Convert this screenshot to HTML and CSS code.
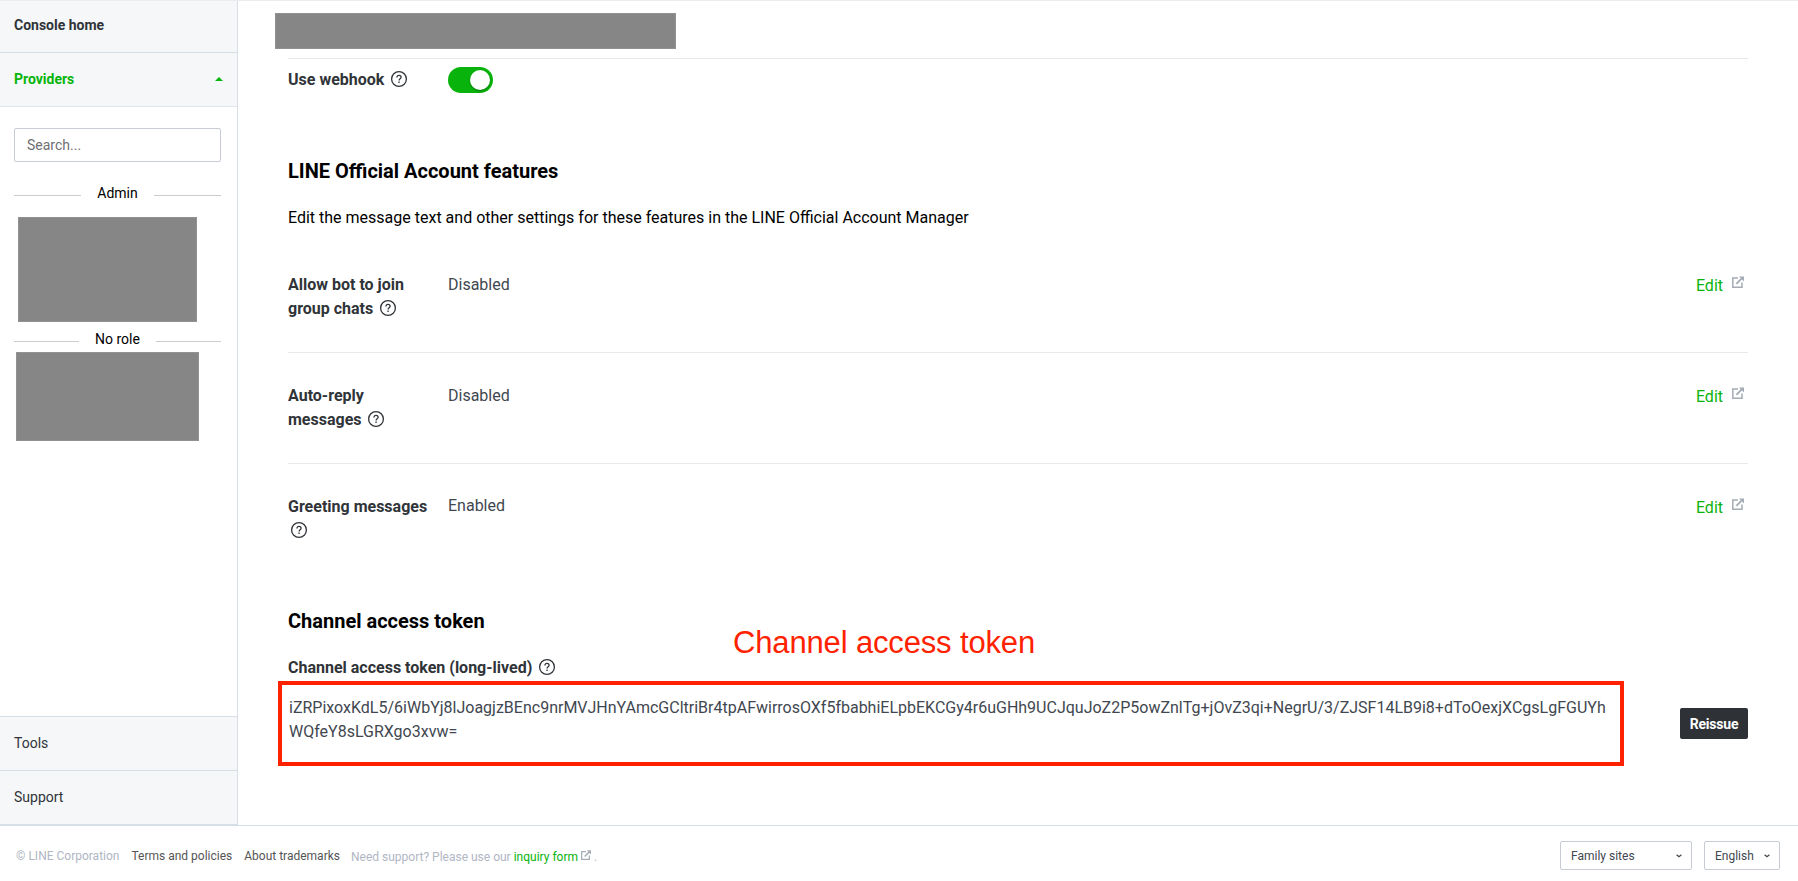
FILE: index.html
```html
<!DOCTYPE html>
<html lang="en">
<head>
<meta charset="utf-8">
<title>Channel settings</title>
<link rel="stylesheet" href="styles.css">
</head>
<body>
<svg class="defs" width="0" height="0">
  <symbol id="help" viewBox="0 0 18 18">
    <circle cx="9" cy="9" r="7.4" fill="none" stroke="currentColor" stroke-width="1.3"/>
    <path d="M6.9 7.4C6.9 6.1 7.8 5.3 9 5.3s2.1.8 2.1 1.9c0 1.5-2 1.6-2 3.2" fill="none" stroke="currentColor" stroke-width="1.3"/>
    <path d="M8.4 11.6h1.3v1.3H8.4z" fill="currentColor"/>
  </symbol>
  <symbol id="external" viewBox="0 0 12 12">
    <path d="M6 2H.8v9.2h9.2V6.6" fill="none" stroke="currentColor" stroke-width="1.5"/>
    <path d="M4.4 7.8L10 2.2" fill="none" stroke="currentColor" stroke-width="1.9"/>
    <path d="M7 .4h5v5z" fill="currentColor"/>
  </symbol>
  <symbol id="chevron" viewBox="0 0 8 6">
    <path d="M1.6 1.7L4 3.7l2.4-2" fill="none" stroke="currentColor" stroke-width="1.3"/>
  </symbol>
</svg>
<div class="page">
  <div class="body">
    <nav class="sidebar">
      <a class="nav-item nav-bold">Console home</a>
      <a class="nav-item nav-bold nav-active">Providers<span class="caret"></span></a>
      <div class="providers">
        <input class="search" type="text" placeholder="Search...">
        <div class="divider divider-admin"><span>Admin</span></div>
        <div class="mask mask-admin"></div>
        <div class="divider divider-norole"><span>No role</span></div>
        <div class="mask mask-norole"></div>
      </div>
      <a class="nav-item nav-bottom">Tools</a>
      <a class="nav-item nav-bottom">Support</a>
    </nav>
    <main class="main">
      <div class="mask mask-title"></div>
      <section class="webhook">
        <div class="label">Use webhook <svg class="help"><use href="#help"/></svg></div>
        <div class="toggle"><span class="knob"></span></div>
      </section>
      <h2 class="heading">LINE Official Account features</h2>
      <p class="desc">Edit the message text and other settings for these features in the LINE Official Account Manager</p>
      <div class="row">
        <div class="label">Allow bot to join group chats <svg class="help"><use href="#help"/></svg></div>
        <div class="value">Disabled</div>
        <a class="edit">Edit<svg class="ext"><use href="#external"/></svg></a>
      </div>
      <div class="row">
        <div class="label">Auto-reply messages <svg class="help"><use href="#help"/></svg></div>
        <div class="value">Disabled</div>
        <a class="edit">Edit<svg class="ext"><use href="#external"/></svg></a>
      </div>
      <div class="row row-last">
        <div class="label">Greeting messages <svg class="help"><use href="#help"/></svg></div>
        <div class="value value-on">Enabled</div>
        <a class="edit">Edit<svg class="ext"><use href="#external"/></svg></a>
      </div>
      <h2 class="heading heading-token">Channel access token</h2>
      <div class="token-label">Channel access token (long-lived) <svg class="help"><use href="#help"/></svg></div>
      <div class="token-row">
        <div class="token">iZRPixoxKdL5/6iWbYj8lJoagjzBEnc9nrMVJHnYAmcGCltriBr4tpAFwirrosOXf5fbabhiELpbEKCGy4r6uGHh9UCJquJoZ2P5owZnlTg+jOvZ3qi+NegrU/3/ZJSF14LB9i8+dToOexjXCgsLgFGUYh<br>WQfeY8sLGRXgo3xvw=</div>
        <button class="reissue">Reissue</button>
      </div>
      <div class="callout">Channel access token</div>
    </main>
  </div>
  <footer class="footer">
    <span class="muted">© LINE Corporation</span>
    <a class="flink">Terms and policies</a>
    <a class="flink">About trademarks</a>
    <span class="support">Need support? Please use our <a class="inquiry">inquiry form</a> <svg class="ext-sm"><use href="#external"/></svg> .</span>
    <div class="select select-family">Family sites<svg class="chev"><use href="#chevron"/></svg></div>
    <div class="select select-lang">English<svg class="chev"><use href="#chevron"/></svg></div>
  </footer>
</div>
</body>
</html>
```
FILE: styles.css
```css
* { box-sizing: border-box; }
body { margin: 0; font-family: Roboto, "Liberation Sans", sans-serif; background: #fff; color: #000; }
.defs { position: absolute; }
.page { height: 881px; display: flex; flex-direction: column; border-top: 1px solid #ececee; overflow: hidden; }
.body { height: 824px; display: flex; }
.sidebar { width: 238px; flex: none; display: flex; flex-direction: column; border-right: 1px solid #d6dfe8; border-bottom: 1px solid #d6dfe8; }
.nav-item { height: 54px; flex: none; display: flex; align-items: center; justify-content: space-between; padding: 0 14px 2px; background: #f5f7f9; font-size: 14px; color: #303438; border-bottom: 1px solid #e0e6eb; }
.nav-bold { font-weight: 700; }
.nav-bold:first-child { height: 52px; padding-bottom: 4px; border-color: #d6dfe8; }
.nav-active { color: #06b60a; }
.caret { border: 4px solid transparent; border-top: 0; border-bottom-color: #06b60a; margin-top: 1px; }
.nav-bottom { border-bottom: 0; border-top: 1px solid #d6dfe8; }
.providers { flex: 1; padding: 21px 16px 0 14px; }
.search { display: block; width: 207px; height: 34px; border: 1px solid #c6cbd4; border-radius: 2px; padding: 0 11px 0 12px; font: 14px Roboto, sans-serif; }
.search::placeholder { color: #6e7072; opacity: 1; }
.divider { display: flex; align-items: center; font-size: 14px; line-height: 20px; width: 207px; }
.divider::before, .divider::after { content: ""; flex: 1; height: 1px; background: #c9cdce; margin-top: 5px; }
.divider span { padding: 0 16px; }
.divider-admin { margin-top: 21px; }
.divider-norole { margin-top: 7px; }
.mask { background: #868686; border: 1px solid #929292; }
.mask-admin { width: 179px; height: 105px; margin: 14px 0 0 4px; }
.mask-norole { width: 183px; height: 89px; margin: 3px 0 0 2px; }
.mask-title { width: 401px; height: 36px; margin: 12px 0 9px -13px; }
.main { flex: 1; padding: 0 50px; position: relative; display: flow-root; }
.webhook { display: flex; border-top: 1px solid #e7e8ea; padding-top: 8px; height: 70px; }
.label { width: 140px; margin-right: 20px; flex: none; font-size: 16px; font-weight: 700; line-height: 24px; color: #303438; }
.webhook .label { padding-top: 1px; }
.help { width: 18px; height: 18px; vertical-align: -3px; margin-left: 2px; color: #303438; }
.toggle { width: 45px; height: 26px; border-radius: 13px; background: #08b30b; padding: 3px; display: flex; justify-content: flex-end; }
.knob { width: 20px; height: 20px; border-radius: 50%; background: #fff; box-shadow: 0 1px 2px rgba(0,0,0,.35); }
.heading { margin: 28px 0 0; font-size: 20px; line-height: 30px; font-weight: 700; }
.desc { margin: 20px 0 12px; font-size: 16px; line-height: 24px; }
.row { display: flex; height: 111px; padding-top: 31px; border-bottom: 1px solid #e9e9ea; font-size: 16px; line-height: 24px; }
.row-last { border: 0; }
.value { color: #414750; flex: 1; }
.value-on { margin-top: -1px; }
.edit { color: #08b30b; display: flex; padding-top: 1px; margin-right: 4px; }
.ext { width: 12px; height: 12px; color: #a5acb5; margin: 2px 0 0 9px; }
.heading-token { margin-top: 31px; }
.token-label { margin-top: 20px; font-size: 16px; font-weight: 700; line-height: 24px; color: #303438; }
.token-row { display: flex; align-items: center; justify-content: space-between; margin: 1px 0 0 -10px; }
.token { width: 1346px; height: 85px; border: 4px solid #ff2200; padding: 11px 7px; font-size: 16px; line-height: 24px; color: #414750; white-space: nowrap; }
.reissue { width: 68px; height: 31px; border: 0; border-radius: 2px; background: #2e3136; color: #fff; font: 700 14px Roboto, sans-serif; letter-spacing: -0.2px; padding: 0; }
.callout { position: absolute; left: 495px; top: 624px; font: 31px/36px "Liberation Sans", Arial, sans-serif; letter-spacing: -0.15px; color: #ff2200; white-space: nowrap; }
.footer { flex: 1; border-top: 1px solid #d6dfe8; display: flex; align-items: center; padding: 4px 18px 0 16px; font-size: 12px; }
.muted { color: #b0b6c4; margin-right: 12px; }
.flink { color: #555; margin-right: 12px; }
.flink + .support { margin-left: -1px; }
.support { color: #b0b6c4; flex: 1; padding-top: 2px; }
.inquiry { color: #08b30b; }
.ext-sm { width: 10px; height: 10px; color: #a5acb5; vertical-align: 1px; }
.select { height: 29px; border: 1px solid #c6cbd4; border-radius: 2px; display: flex; align-items: center; justify-content: space-between; padding: 0 8px 0 10px; color: #414750; }
.select-family { width: 132px; margin-right: 12px; }
.select-lang { width: 76px; }
.chev { width: 8px; height: 6px; }
```
